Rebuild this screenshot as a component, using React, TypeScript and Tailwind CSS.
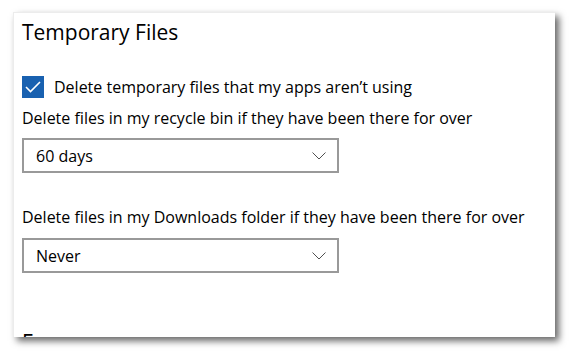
import React from "react";

const font = { fontFamily: '"Open Sans", "Noto Sans", Arial, sans-serif' };

function Chevron() {
  return (
    <svg width="14" height="8" viewBox="0 0 14 8" className="shrink-0">
      <path d="M0.5 0.5 L7 7 L13.5 0.5" fill="none" stroke="#505050" strokeWidth="1" />
    </svg>
  );
}

function Dropdown({ value }: { value: string }) {
  return (
    <div className="flex h-[35px] w-[317px] items-center justify-between border-2 border-[#999999] bg-white pl-[12px] pr-[11px]">
      <span className="text-[16px] leading-5 text-black">{value}</span>
      <Chevron />
    </div>
  );
}

export default function App() {
  return (
    <div className="h-[353px] w-[570px] bg-white pl-[13px] pt-[12px]" style={font}>
      <div className="h-[325px] w-[542px] overflow-hidden border-l border-t border-[#ececec] bg-white pl-[8px] pt-[5px] shadow-[4px_4px_7px_rgba(0,0,0,0.6)]">
        <div className="text-[21px] leading-[28px] text-black">Temporary Files</div>
        <div className="mt-[30px] flex h-[22px] items-center gap-[10px]">
          <div className="flex h-[22px] w-[22px] items-center justify-center bg-[#1961b0]">
            <svg width="16" height="12" viewBox="0 0 16 12">
              <path d="M1 6 L5.5 10.5 L15 1" fill="none" stroke="white" strokeWidth="1.6" />
            </svg>
          </div>
          <span className="text-[16px] leading-5 text-black">Delete temporary files that my apps aren’t using</span>
        </div>
        <div className="mt-[10px] text-[16px] leading-5 text-black">
          Delete files in my recycle bin if they have been there for over
        </div>
        <div className="mt-[10px]">
          <Dropdown value="60 days" />
        </div>
        <div className="mt-[34px] text-[16px] leading-5 text-black">
          Delete files in my Downloads folder if they have been there for over
        </div>
        <div className="mt-[11px]">
          <Dropdown value="Never" />
        </div>
        <div className="mt-[55px] text-[21px] leading-[28px] text-black">Free up space now</div>
      </div>
    </div>
  );
}
